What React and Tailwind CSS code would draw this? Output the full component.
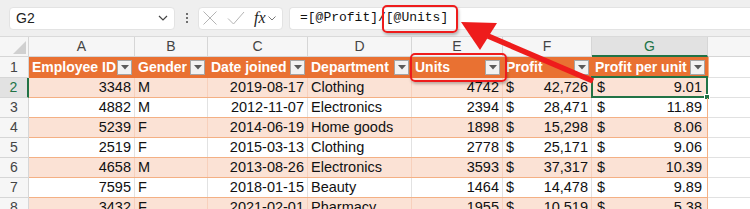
import React from "react";

const cols = [106, 73, 100, 104, 91, 89, 116];
const letters = ["A", "B", "C", "D", "E", "F", "G"];
const headers = ["Employee ID", "Gender", "Date joined", "Department", "Units", "Profit", "Profit per unit"];

const rows = [
  [3348, "M", "2019-08-17", "Clothing", 4742, "42,726", "9.01"],
  [4882, "M", "2012-11-07", "Electronics", 2394, "28,471", "11.89"],
  [5239, "F", "2014-06-19", "Home goods", 1898, "15,298", "8.06"],
  [2519, "F", "2015-03-13", "Clothing", 2778, "25,171", "9.06"],
  [4658, "M", "2013-08-26", "Electronics", 3593, "37,317", "10.39"],
  [7595, "F", "2018-01-15", "Beauty", 1464, "14,478", "9.89"],
  [3432, "F", "2021-02-01", "Pharmacy", 1955, "10,519", "5.38"],
];

function FilterButton() {
  return (
    <div className="w-[15px] h-[15px] shrink-0 bg-[#f2f2f2] border border-[#a6a6a6] flex items-center justify-center">
      <svg width="8" height="5" viewBox="0 0 8 5">
        <path d="M0 0 L8 0 L4 4.5 Z" fill="#5a5a5a" />
      </svg>
    </div>
  );
}

function FormulaBar() {
  return (
    <div className="h-[37px] bg-[#efefef] flex items-center pl-[9px] border-b border-[#dadada]">
      <div className="w-[166px] h-[23px] bg-white rounded-[4px] border border-[#e3e3e3] flex items-center justify-between pl-[6px] pr-[6px] text-[14px] text-[#222]">
        <span>G2</span>
        <svg width="10" height="6" viewBox="0 0 10 6">
          <path d="M1 1 L5 5 L9 1" stroke="#444" strokeWidth="1.2" fill="none" />
        </svg>
      </div>
      <div className="w-[23px] flex flex-col items-center gap-[2px]">
        <span className="w-[2px] h-[2px] bg-[#444] rounded-full"></span>
        <span className="w-[2px] h-[2px] bg-[#444] rounded-full"></span>
        <span className="w-[2px] h-[2px] bg-[#444] rounded-full"></span>
      </div>
      <div className="w-[85px] h-[23px] bg-white rounded-[4px] border border-[#e3e3e3] flex items-center pl-[3px] gap-[9px]">
        <svg width="16" height="16" viewBox="0 0 16 16">
          <path d="M1.5 1.5 L14.5 14.5 M14.5 1.5 L1.5 14.5" stroke="#b4b4b4" strokeWidth="1" fill="none" />
        </svg>
        <svg width="18" height="14" viewBox="0 0 18 14">
          <path d="M1 7.5 L6.5 13 L17 1" stroke="#b4b4b4" strokeWidth="1" fill="none" />
        </svg>
        <div className="flex items-center gap-[2px]">
          <span className="italic text-[16px] text-[#222] leading-none" style={{ fontFamily: '"Liberation Serif", serif' }}>
            fx
          </span>
          <svg width="8" height="5" viewBox="0 0 8 5">
            <path d="M0.5 0.5 L4 4 L7.5 0.5" stroke="#777" strokeWidth="1" fill="none" />
          </svg>
        </div>
      </div>
      <div className="ml-[6px] flex-1 h-[23px] bg-white rounded-l-[4px] border border-r-0 border-[#e3e3e3] flex items-center pl-[10px] text-[13px] text-[#111]" style={{ fontFamily: '"Liberation Mono", monospace' }}>
        =[@Profit]/[@Units]
      </div>
    </div>
  );
}

function ColumnHeaders() {
  return (
    <div className="flex h-[20px] bg-[#f6f6f6] text-[14px] text-[#444]">
      <div className="w-[29px] shrink-0 border-r border-b border-[#d6d6d6] flex items-end justify-end pr-[2px] pb-[2px]">
        <svg width="13" height="13" viewBox="0 0 13 13">
          <path d="M13 0 L13 13 L0 13 Z" fill="#d0d0d0" />
        </svg>
      </div>
      {letters.map((l, i) => (
        <div
          key={l}
          style={{ width: cols[i] }}
          className={
            l === "G"
              ? "shrink-0 flex items-center justify-center bg-[#e2e2e2] border-r border-[#d6d6d6] border-b-2 border-b-[#217346] text-[#217346]"
              : "shrink-0 flex items-center justify-center border-r border-b border-[#d6d6d6]"
          }
        >
          {l}
        </div>
      ))}
      <div className="flex-1 border-b border-[#d6d6d6]"></div>
    </div>
  );
}

function HeaderRow() {
  return (
    <div className="flex h-[21px]">
      <div className="w-[29px] shrink-0 bg-[#f6f6f6] border-r border-b border-[#d6d6d6] flex items-center justify-center text-[14px] text-[#444]">
        1
      </div>
      {headers.map((h, i) => (
        <div
          key={h}
          style={{ width: cols[i] }}
          className="shrink-0 bg-[#e97132] flex items-center justify-between pl-[3px] pr-[2px] text-white font-bold text-[14px] whitespace-nowrap overflow-hidden border-r border-[#e97132]"
        >
          <span className="overflow-hidden">{h}</span>
          <FilterButton />
        </div>
      ))}
      <div className="flex-1 border-l border-[#f4b084] border-b border-b-[#e1e1e1]"></div>
    </div>
  );
}

function DataRow({ r, idx }) {
  const n = idx + 2;
  const banded = n % 2 === 0;
  const bg = banded ? "bg-[#fbe2d5]" : "bg-white";
  const vline = banded ? "border-r border-[#f7d0bc]" : "border-r border-[#e2e2e2]";
  const selectedRow = n === 2;
  return (
    <div className="flex h-[20px] text-[14.5px] text-[#111]">
      <div
        className={
          selectedRow
            ? "w-[29px] shrink-0 bg-[#e2e2e2] border-r-2 border-r-[#217346] border-b border-b-[#d6d6d6] flex items-center justify-center text-[14px] text-[#217346]"
            : "w-[29px] shrink-0 bg-[#f6f6f6] border-r border-b border-[#d6d6d6] flex items-center justify-center text-[14px] text-[#444]"
        }
      >
        {n}
      </div>
      <div className={`flex shrink-0 border-b border-[#f4b084] ${bg}`}>
        <div style={{ width: cols[0] }} className={`shrink-0 text-right pr-[3px] leading-[19px] ${vline}`}>{r[0]}</div>
        <div style={{ width: cols[1] }} className={`shrink-0 pl-[3px] leading-[19px] ${vline}`}>{r[1]}</div>
        <div style={{ width: cols[2] }} className={`shrink-0 text-right pr-[3px] leading-[19px] ${vline}`}>{r[2]}</div>
        <div style={{ width: cols[3] }} className={`shrink-0 pl-[3px] leading-[19px] whitespace-nowrap ${vline}`}>{r[3]}</div>
        <div style={{ width: cols[4] }} className={`shrink-0 text-right pr-[3px] leading-[19px] ${vline}`}>{r[4]}</div>
        <div style={{ width: cols[5] }} className={`shrink-0 flex justify-between pl-[3px] pr-[3px] leading-[19px] ${vline}`}>
          <span>$</span>
          <span>{r[5]}</span>
        </div>
        <div style={{ width: cols[6] }} className="shrink-0 relative flex justify-between pl-[5px] pr-[5px] leading-[19px] border-r border-[#f4b084]">
          <span>$</span>
          <span>{r[6]}</span>
          {selectedRow && (
            <div className="absolute -left-px -top-[2px] -right-px -bottom-px border-2 border-[#217346]">
              <div className="absolute -right-[4px] -bottom-[4px] w-[6px] h-[6px] bg-[#217346] border border-white"></div>
            </div>
          )}
        </div>
      </div>
      <div className="flex-1 bg-white border-b border-[#e1e1e1]"></div>
    </div>
  );
}

export default function App() {
  return (
    <div className="relative w-[750px] h-[209px] overflow-hidden bg-white" style={{ fontFamily: '"Liberation Sans", Arial, sans-serif' }}>
      <FormulaBar />
      <ColumnHeaders />
      <HeaderRow />
      {rows.map((r, i) => (
        <DataRow key={i} r={r} idx={i} />
      ))}

      {/* red callouts */}
      <div className="absolute left-[382px] top-[5px] w-[76px] h-[28px] border-2 border-[#ee1c1c] rounded-[5px] shadow-[1px_2px_3px_rgba(0,0,0,0.25)] pointer-events-none"></div>
      <div className="absolute left-[410px] top-[53px] w-[97px] h-[29px] border-2 border-[#ee1c1c] rounded-[5px] shadow-[1px_2px_3px_rgba(0,0,0,0.25)] pointer-events-none"></div>
      <svg className="absolute left-0 top-0 pointer-events-none" width="750" height="209" viewBox="0 0 750 209">
        <line x1="488" y1="36" x2="593" y2="81" stroke="#ee1c1c" strokeWidth="5.5" />
        <polygon points="461,22 497,23 480,50" fill="#ee1c1c" />
      </svg>
    </div>
  );
}
